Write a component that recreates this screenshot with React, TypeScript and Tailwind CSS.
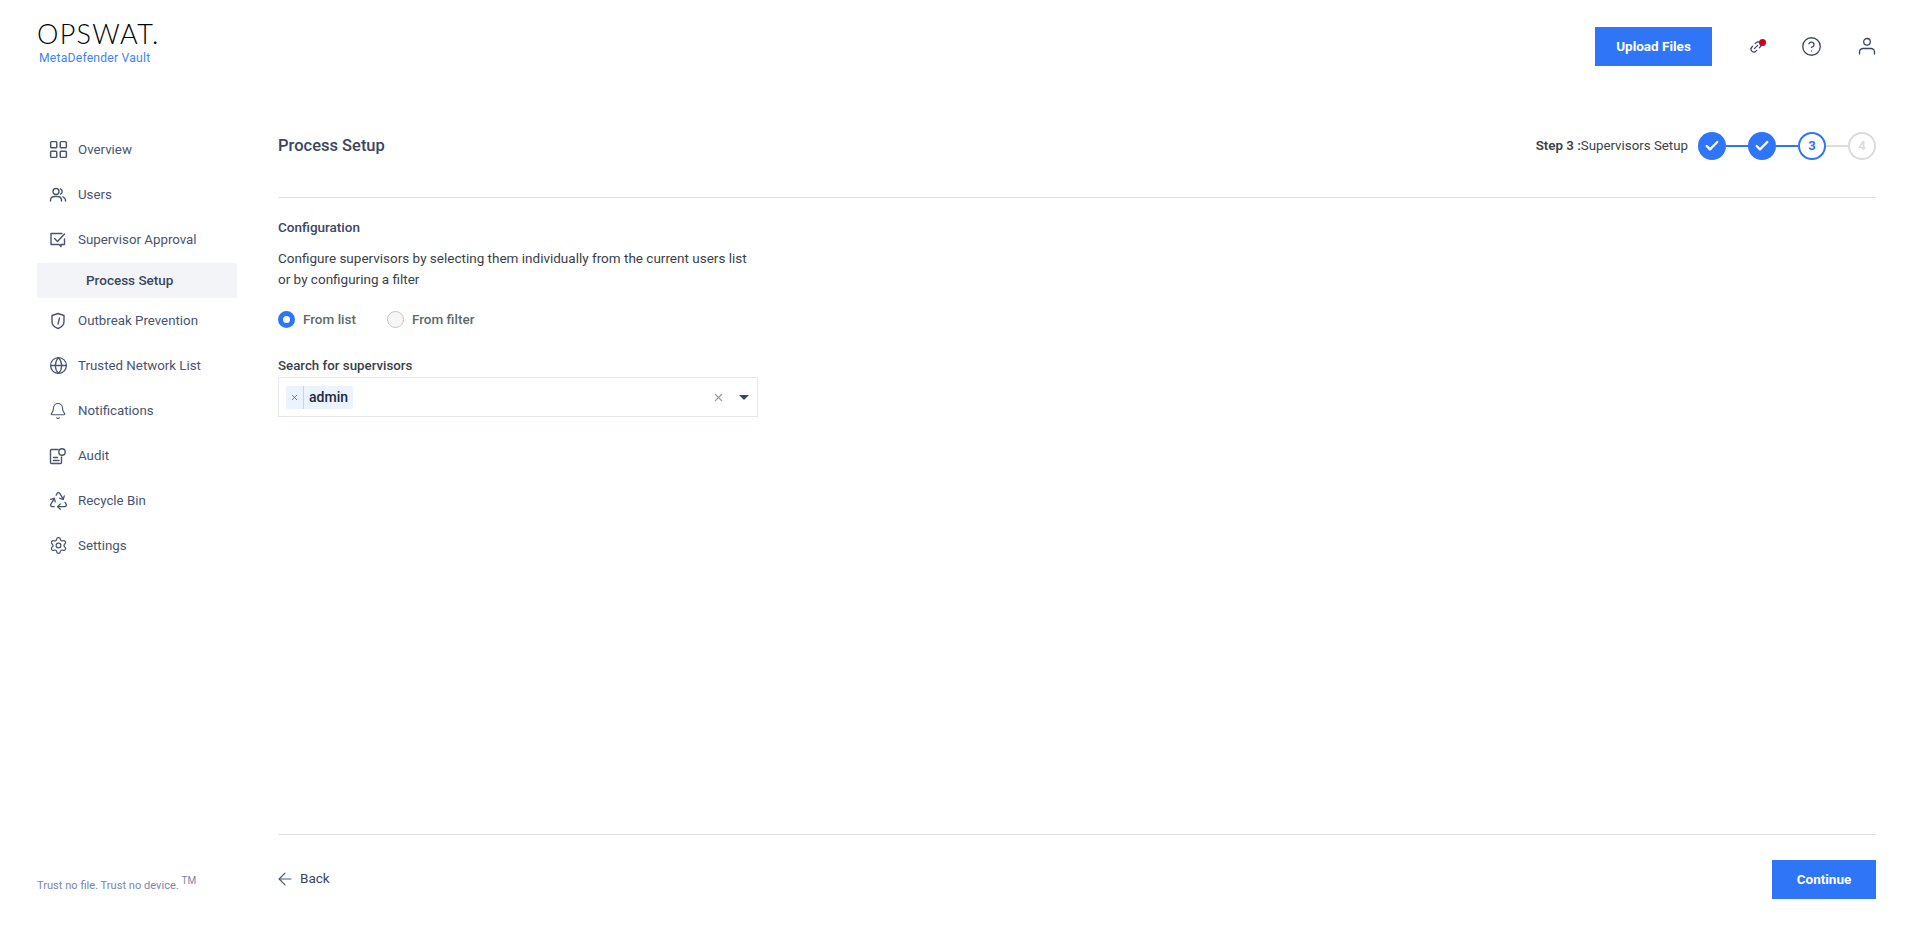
import { ArrowLeft, Bell, Check, CircleHelp, Globe, LayoutGrid, Link2, Recycle, Settings, X } from 'lucide-react';
import type { ReactNode } from 'react';

const iconClass = 'w-[18px] h-[18px] shrink-0';

function UsersIcon() {
  return (
    <svg viewBox="0 0 18 18" className={iconClass} fill="none" stroke="currentColor" strokeWidth="1.4" strokeLinecap="round">
      <circle cx="7" cy="5.5" r="3" />
      <path d="M1.5 15v-1a4 4 0 0 1 4-3.5h3a4 4 0 0 1 4 3.5v1" />
      <path d="M11.5 2.8a3 3 0 0 1 0 5.4" />
      <path d="M14 10.8a4 4 0 0 1 2.5 3.2v1" />
    </svg>
  );
}

function ApprovalIcon() {
  return (
    <svg viewBox="0 0 18 18" className={iconClass} fill="none" stroke="currentColor" strokeWidth="1.4" strokeLinecap="round" strokeLinejoin="round">
      <path d="M13 2.5H2v11h8l2 2v-2h3.500V8" />
      <path d="M5.500 7.500l3 3 7-7.500" />
    </svg>
  );
}

function ShieldIcon() {
  return (
    <svg viewBox="0 0 18 18" className={iconClass} fill="none" stroke="currentColor" strokeWidth="1.4" strokeLinecap="round" strokeLinejoin="round">
      <path d="M9 1.500l6 2v6c0 3.500-2.500 5.800-6 7-3.500-1.200-6-3.500-6-7v-6z" />
      <path d="M10.500 6l-1.500 6" />
    </svg>
  );
}

function AuditIcon() {
  return (
    <svg viewBox="0 0 18 18" className={iconClass} fill="none" stroke="currentColor" strokeWidth="1.4" strokeLinecap="round" strokeLinejoin="round">
      <path d="M9 2.500H2.500a1 1 0 0 0-1 1v12a1 1 0 0 0 1 1h9a1 1 0 0 0 1-1V10" />
      <circle cx="13" cy="5" r="3.200" />
      <path d="M4.500 10.500h4M4.500 13.500h5.500" />
    </svg>
  );
}

function UserIcon() {
  return (
    <svg viewBox="0 0 18 18" className="w-[18px] h-[18px]" fill="none" stroke="currentColor" strokeWidth="1.3" strokeLinecap="round">
      <circle cx="9" cy="4.800" r="3.300" />
      <path d="M1.500 17v-2a3.500 3.500 0 0 1 3.500-3.500h8a3.500 3.500 0 0 1 3.500 3.500v2" />
    </svg>
  );
}

interface NavItem {
  label: string;
  icon: ReactNode;
}

const navTop: NavItem[] = [
  { label: 'Overview', icon: <LayoutGrid className="w-[21px] h-[21px] shrink-0" strokeWidth={1.7} /> },
  { label: 'Users', icon: <UsersIcon /> },
  { label: 'Supervisor Approval', icon: <ApprovalIcon /> },
];

const navBottom: NavItem[] = [
  { label: 'Outbreak Prevention', icon: <ShieldIcon /> },
  { label: 'Trusted Network List', icon: <Globe className="w-[19px] h-[19px] shrink-0" strokeWidth={1.6} /> },
  { label: 'Notifications', icon: <Bell className={iconClass} strokeWidth={1.5} /> },
  { label: 'Audit', icon: <AuditIcon /> },
  { label: 'Recycle Bin', icon: <Recycle className="w-[21px] h-[21px] shrink-0" strokeWidth={1.5} /> },
  { label: 'Settings', icon: <Settings className="w-[19px] h-[19px] shrink-0" strokeWidth={1.6} /> },
];

function NavRow({ item }: { item: NavItem }) {
  return (
    <div className="h-[45px] pl-[12px] flex items-center gap-[11px] text-[13.3px] text-[#485470]">
      <span className="w-[18px] flex justify-center text-[#485470]">{item.icon}</span>
      {item.label}
    </div>
  );
}

function DoneStep() {
  return (
    <div className="w-[28px] h-[28px] rounded-full bg-[#2e75f8] flex items-center justify-center">
      <Check className="w-[16px] h-[16px] text-white" strokeWidth={3.5} />
    </div>
  );
}

export default function App() {
  return (
    <div className="h-screen flex flex-col bg-white font-['Roboto',sans-serif]">
      <header className="h-[92px] shrink-0 pl-[37px] pr-[39px] flex justify-between">
        <div className="pt-[17px]">
          <div className="text-[27px] leading-[34px] font-['Lato',sans-serif] font-light tracking-[1.3px] text-black">OPSWAT.</div>
          <div className="pl-[2px] text-[12.2px] leading-[14px] tracking-[0.2px] text-[#3d84f7]">MetaDefender Vault</div>
        </div>
        <div className="pt-[27px] flex items-start">
          <button className="w-[117px] h-[39px] bg-[#2e75f8] text-white text-[13.5px] font-bold">Upload Files</button>
          <div className="relative ml-[35px] mt-[11px] w-[18px] h-[18px] flex items-center justify-center text-[#3b4660]">
            <Link2 className="w-[14px] h-[14px] -rotate-45" strokeWidth={2} />
            <span className="absolute top-[1px] right-[-1px] w-[7px] h-[7px] rounded-full bg-[#d0021b]" />
          </div>
          <CircleHelp className="ml-[36px] mt-[9px] w-[21px] h-[21px] text-[#3b4660]" strokeWidth={1.5} />
          <div className="ml-[36px] mt-[10px] text-[#3b4660]">
            <UserIcon />
          </div>
        </div>
      </header>

      <div className="flex-1 flex pl-[37px] pr-[39px] pb-[27px]">
        <aside className="w-[200px] shrink-0 flex flex-col pt-[35px]">
          {navTop.map((item) => (
            <NavRow key={item.label} item={item} />
          ))}
          <div className="h-[35px] mt-[1px] bg-[#f3f4f8] pl-[49px] flex items-center text-[13.5px] font-medium text-[#3b4660]">Process Setup</div>
          {navBottom.map((item) => (
            <NavRow key={item.label} item={item} />
          ))}
          <div className="mt-auto mb-[4px] text-[11.1px] text-[#7a86ab]">
            Trust no file. Trust no device. <sup className="text-[10px]">TM</sup>
          </div>
        </aside>

        <main className="flex-1 ml-[41px] flex flex-col">
          <div className="mt-[28px] h-[52px] pb-[1px] flex items-center justify-between">
            <h1 className="mt-[2px] text-[16.5px] font-medium text-[#3b4660]">Process Setup</h1>
            <div className="flex items-center">
              <span className="mr-[10px] text-[13.3px] text-[#3a3f48]">
                <b className="font-semibold">Step 3 :</b>Supervisors Setup
              </span>
              <DoneStep />
              <div className="w-[22px] h-[2px] bg-[#2e75f8]" />
              <DoneStep />
              <div className="w-[22px] h-[2px] bg-[#2e75f8]" />
              <div className="w-[28px] h-[28px] rounded-full border-2 border-[#2e75f8] flex items-center justify-center text-[13px] font-bold text-[#2e75f8]">3</div>
              <div className="w-[22px] h-[2px] bg-[#dcdcdc]" />
              <div className="w-[28px] h-[28px] rounded-full border-2 border-[#dcdcdc] flex items-center justify-center text-[13px] font-bold text-[#dcdcdc]">4</div>
            </div>
          </div>
          <div className="mt-[25px] h-[1px] bg-[#e2e2e4]" />

          <section className="flex-1">
            <h2 className="mt-[19px] text-[13.5px] leading-[20px] font-medium text-[#3b4660]">Configuration</h2>
            <p className="mt-[11px] w-[480px] text-[13.5px] leading-[21px] text-[#3a3f48]">
              Configure supervisors by selecting them individually from the current users list or by configuring a filter
            </p>
            <div className="mt-[19px] h-[20px] flex items-center text-[13.5px] font-medium text-[#5e6b6b]">
              <span className="w-[17px] h-[17px] rounded-full border-[5px] border-[#2e75f8] bg-white" />
              <span className="ml-[8px]">From list</span>
              <span className="ml-[31px] w-[17px] h-[17px] rounded-full border border-[#c4c4c4] bg-[#f6f6f6]" />
              <span className="ml-[8px]">From filter</span>
            </div>
            <label className="block mt-[27px] text-[13.3px] leading-[20px] font-medium text-[#3a3f48]">Search for supervisors</label>
            <div className="mt-[1px] w-[480px] h-[40px] border border-[#e6e8ef] pl-[7px] pr-[7px] flex items-center">
              <div className="h-[23px] flex items-center bg-[#eaf3ff] rounded-[2px] text-[14px] font-medium text-[#23283a]">
                <span className="w-[18px] flex justify-center border-r border-[#b9d6fb] h-full items-center">
                  <X className="w-[9px] h-[9px] text-[#4a5468]" strokeWidth={2} />
                </span>
                <span className="px-[5px]">admin</span>
              </div>
              <X className="ml-auto w-[13px] h-[13px] text-[#9a9a9a]" strokeWidth={2} />
              <span className="ml-[14px] mr-[1px] w-0 h-0 border-x-[5px] border-x-transparent border-t-[5px] border-t-[#3b4660]" />
            </div>
          </section>

          <div className="h-[1px] bg-[#e2e2e4]" />
          <div className="mt-[25px] flex items-center justify-between">
            <div className="-mt-[2px] flex items-center gap-[5px] -ml-[3px] text-[13.5px] text-[#3b4660]">
              <ArrowLeft className="w-[20px] h-[20px] text-[#485470]" strokeWidth={1.4} />
              Back
            </div>
            <button className="w-[104px] h-[39px] bg-[#2e75f8] text-white text-[13.5px] font-bold">Continue</button>
          </div>
        </main>
      </div>
    </div>
  );
}
